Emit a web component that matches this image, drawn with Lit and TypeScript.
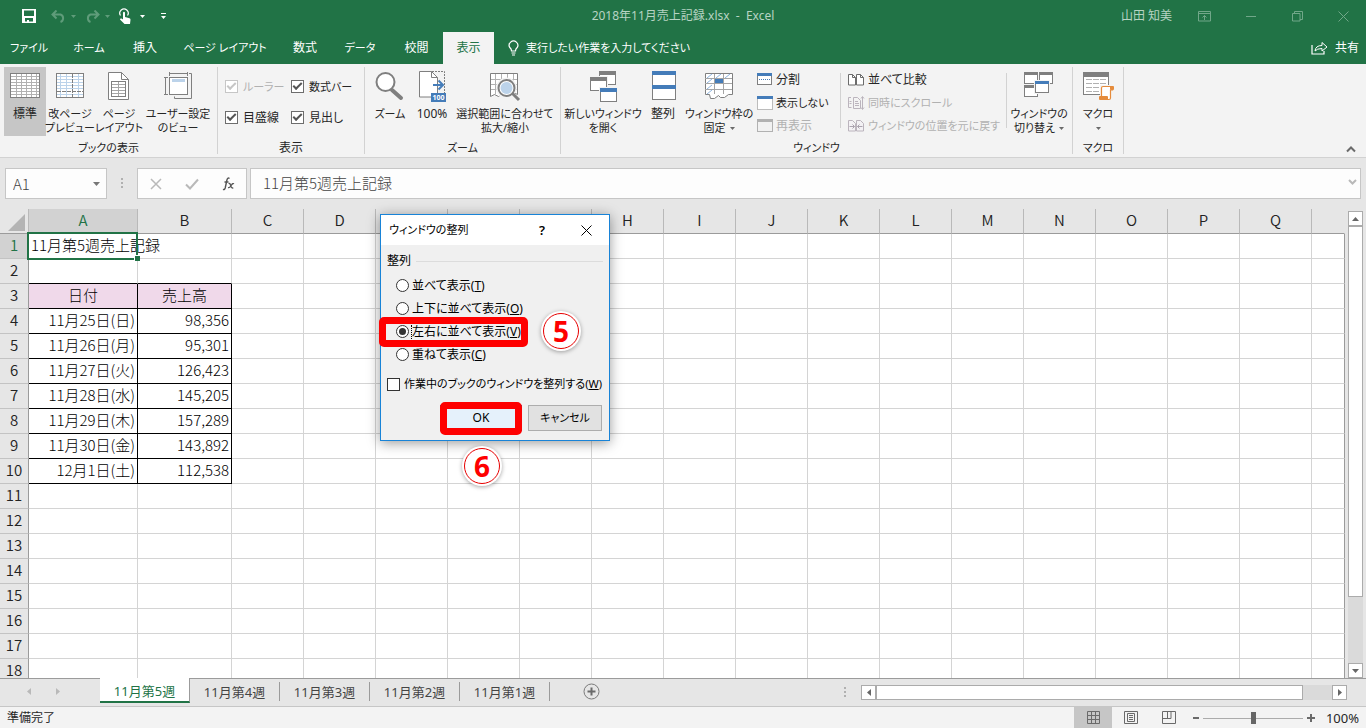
import { LitElement, html, css, svg, nothing } from "lit";
import { customElement, state } from "lit/decorators.js";
import { classMap } from "lit/directives/class-map.js";

const GRAY = "#7f7f7f";
const BLUE = "#447cb9";
const PALE = "#bcd3ea";

type Icon = { w: number; h: number; body: unknown };
const icon = (i: Icon) => html`<svg class="ico" width=${i.w} height=${i.h} viewBox="0 0 ${i.w} ${i.h}" aria-hidden="true">${i.body}</svg>`;
const caret = html`<svg class="caret" width="5" height="3" viewBox="0 0 5 3" aria-hidden="true"><path d="M0 0h5L2.500 3z" fill="currentColor"/></svg>`;

// Labels made mostly of kana are set one step smaller than kanji labels.
const sizeOf = (t: string) => ((t.match(/[\u3040-\u30ff]/g)?.length ?? 0) * 2 >= t.length ? "kana" : "kanji");

const gridPath = (x: number, y: number, w: number, h: number, sx: number, sy: number) => {
  let d = "";
  for (let i = x + sx; i < x + w; i += sx) d += `M${i + 0.5} ${y}v${h}`;
  for (let j = y + sy; j < y + h; j += sy) d += `M${x} ${j + 0.5}h${w}`;
  return d;
};

const ICONS: Record<string, Icon> = {
  normal: { w: 32, h: 32, body: svg`
    <rect x="1.5" y="3.5" width="29" height="24" fill="#fff" stroke=${GRAY}/>
    <path d=${gridPath(2, 3, 28, 24, 5, 3)} stroke="#b1b1b1" fill="none"/>
    <rect x="1.5" y="3.5" width="29" height="24" fill="none" stroke=${GRAY}/>` },
  breaks: { w: 32, h: 32, body: svg`
    <rect x="2.5" y="3.5" width="27" height="24" fill="#fff" stroke=${GRAY}/>
    <path d="M6.500 4v23M12.500 4v23M24.500 4v23M3 6.500h26M3 9.500h26M3 12.500h26M3 15.500h26M3 18.500h26M3 24.500h26" stroke=${PALE} fill="none"/>
    <path d="M18.500 4v23" stroke=${GRAY} stroke-dasharray="4 1"/>
    <path d="M3 21.500h26" stroke=${GRAY} stroke-dasharray="4 1"/>
    <rect x="2.500" y="3.500" width="27" height="24" fill="none" stroke=${GRAY}/>` },
  page: { w: 32, h: 32, body: svg`
    <path d="M5.500 2.500h13l7 7v20h-20z" fill="#fff" stroke=${GRAY}/>
    <path d="M18.500 2.500v7h7" fill="none" stroke=${GRAY}/>
    <rect x="8.500" y="11.500" width="14" height="15" fill="none" stroke=${GRAY}/>
    <path d="M15.500 12v14M9 14.500h13M9 17.500h13M9 20.500h13M9 23.500h13" stroke="#a5a5a5"/>` },
  custom: { w: 32, h: 32, body: svg`
    <path d="M7.500 2v4M25.500 2v4M7 3.500h19M2 7.500h4M2 24.500h4M3.500 7v18" stroke=${GRAY} fill="none"/>
    <path d="M27 3.500h2.500v25h-17v-2" fill="none" stroke=${GRAY}/>
    <rect x="7.500" y="7.500" width="18" height="17" fill="#fff" stroke=${GRAY}/>
    <rect x="10" y="9" width="13" height="3" fill=${PALE}/>` },
  zoom: { w: 32, h: 32, body: svg`
    <path d="M18 20l9 8" stroke=${GRAY} stroke-width="4" stroke-linecap="round"/>
    <circle cx="11.500" cy="12" r="9" fill="#fff" stroke=${GRAY} stroke-width="2"/>` },
  full: { w: 32, h: 32, body: svg`
    <path d="M16 1.500h12.500v22" fill="none" stroke=${GRAY} stroke-dasharray="2 1"/>
    <path d="M3.500 1.500h12l6 6v19.500h-18z" fill="#fff" stroke=${GRAY}/>
    <path d="M15.500 1.500v6h6" fill="none" stroke=${GRAY}/>
    <path d="M17 15h10M22.500 10.500l4.500 4.500l-4.500 4.500" fill="none" stroke=${BLUE} stroke-width="2"/>
    <rect x="15" y="23" width="15" height="9" fill=${BLUE}/>
    <text x="22.500" y="30" font-size="7" font-weight="700" text-anchor="middle" fill="#fff">100</text>` },
  select: { w: 32, h: 32, body: svg`
    <path d="M1.500 3.500h27v21l-4-2-5 4-5-4-5 4-4-2-4 2z" fill="#fff" stroke=${GRAY}/>
    <path d="M6.500 4v20M12.500 4v20M18.500 4v20M24.500 4v20M2 9.500h26M2 14.500h26M2 19.500h26" stroke="#b1b1b1"/>
    <circle cx="17.500" cy="18" r="9" fill="none" stroke="#f3f3f3" stroke-width="3"/>
    <path d="M23 23l7 7" stroke=${GRAY} stroke-width="3"/>
    <circle cx="17.500" cy="18" r="8" fill="#fff" stroke=${GRAY} stroke-width="2"/>
    <circle cx="17.500" cy="18" r="6" fill=${PALE}/>` },
  newwin: { w: 32, h: 32, body: svg`
    <rect x="12.500" y="1.500" width="16" height="13" fill="#fff" stroke=${GRAY}/><rect x="12" y="1" width="17" height="4" fill=${GRAY}/>
    <rect x="2" y="6" width="19" height="16" fill="#f3f3f3"/>
    <rect x="3.500" y="7.500" width="16" height="13" fill="#fff" stroke=${GRAY}/><rect x="3" y="7" width="17" height="4" fill=${GRAY}/>
    <rect x="12" y="17" width="19" height="15" fill="#f3f3f3"/>
    <rect x="13.500" y="18.500" width="16" height="13" fill="#fff" stroke=${GRAY}/><rect x="13" y="18" width="17" height="4" fill=${BLUE}/>` },
  arrange: { w: 32, h: 32, body: svg`
    <rect x="5.500" y="1.500" width="23" height="28" fill="#fff" stroke=${GRAY}/>
    <rect x="5" y="1" width="24" height="4" fill=${BLUE}/><rect x="5" y="15" width="24" height="4" fill=${BLUE}/>` },
  freeze: { w: 32, h: 32, body: svg`
    <path d="M2.500 3.500h27v21h-4l-4 3h-4l-2-2-4 3h-4l-1-4h-4z" fill="#fff" stroke=${GRAY}/>
    <path d="M11.500 4v20M20.500 4v20M2 8.500h27M2 13.500h27M2 19.500h27" stroke="#a5a5a5"/>
    <path d="M4 8l5-4M13 8l5-4M22 8l5-4M4 13l5-4M4 19l5-4M4 24l5-4" stroke="#8eb4de"/>
    <rect x="12" y="9" width="8" height="4" fill=${BLUE}/>` },
  split: { w: 16, h: 14, body: svg`
    <rect x=".5" y=".5" width="14" height="11" fill="#fff" stroke=${GRAY}/><rect width="15" height="3" fill=${BLUE}/>
    <path d="M2 6.500h11" stroke=${BLUE} stroke-dasharray="1 1"/>` },
  hide: { w: 16, h: 14, body: svg`
    <rect x=".5" y=".5" width="15" height="13" fill="#fff" stroke=${GRAY} stroke-dasharray="1 1"/><rect width="16" height="3" fill=${BLUE}/>` },
  unhide: { w: 16, h: 14, body: svg`
    <rect x=".5" y=".5" width="15" height="12" fill="#f1f1f1" stroke="#b1b1b1"/><rect width="16" height="3" fill="#b1b1b1"/>` },
  side: { w: 17, h: 14, body: svg`
    <path d="M.5 1.500h4l3 3v7.500h-7zM8.500 1.500h4l3 3v7.500h-7z" fill="#fff" stroke="#6b6b6b"/>
    <path d="M4.500 1.500v3h3M12.500 1.500v3h3" fill="none" stroke="#6b6b6b"/>` },
  sync: { w: 17, h: 14, body: svg`
    <path d="M3 1.500h-2.500v10h3M5.500 1.500h4l3 3v8h-7zM7 5.500h3M7 7.500h4M7 9.500h4M1.500 5.500h2M1.500 7.500h2M14.500 1v12M13 2.500l1.500-2 1.500 2M13 11.500l1.500 2 1.500-2" fill="none" stroke="#bbb4bd"/>` },
  reset: { w: 17, h: 14, body: svg`
    <path d="M.5 1.500h4l3 3v7.500h-7zM8.500 1.500h4l3 3v7.500h-7z" fill="#f3f1f4" stroke="#bbb4bd"/>
    <path d="M1.500 7.500h5M4.500 5.500l2 2-2 2M14.500 7.500h-5M11.500 5.500l-2 2 2 2" fill="none" stroke="#aaa2ae"/>` },
  switchwin: { w: 32, h: 32, body: svg`
    <rect x="1.500" y="2.500" width="13" height="11" fill="#fff" stroke=${GRAY}/><rect x="1" y="2" width="14" height="3" fill=${GRAY}/>
    <rect x="16.500" y="2.500" width="13" height="11" fill="#fff" stroke=${GRAY}/><rect x="16" y="2" width="14" height="3" fill=${GRAY}/>
    <rect x="1.500" y="15.500" width="13" height="11" fill="#fff" stroke=${GRAY}/><rect x="1" y="15" width="14" height="3" fill=${GRAY}/>
    <rect x="11" y="10" width="16" height="14" fill="#f3f3f3"/>
    <rect x="12.500" y="11.500" width="13" height="11" fill="#fff" stroke=${GRAY}/><rect x="12" y="11" width="14" height="3" fill=${BLUE}/>` },
  macro: { w: 32, h: 32, body: svg`
    <rect x="1.500" y="2.500" width="25" height="22" fill="#fff" stroke=${GRAY}/><rect x="1" y="2" width="26" height="5" fill=${GRAY}/>
    <path d="M4 9.500h6M11 9.500h6M18 9.500h6M4 13.500h6M11 13.500h6M18 13.500h6M4 17.500h6M11 17.500h6M4 21.500h6M11 21.500h6" stroke="#b1b1b1"/>
    <path d="M19.500 16.500h11v4h-2v8.500h-9z" fill="#fff" stroke="#f3f3f3" stroke-width="3"/>
    <path d="M19.500 26v-8q0-1.500 1.500-1.500h9.500v3.500h-2v8q0 1.500-1.500 1.500h-8.500" fill="#fff" stroke="#e58b3b" stroke-width="1.200"/>
    <rect x="17" y="26" width="9" height="4" rx="1" fill="#e58b3b"/><rect x="28" y="16" width="4" height="4" rx="1" fill="#e58b3b"/>` },
};

const TABS = ["ファイル", "ホーム", "挿入", "ページ レイアウト", "数式", "データ", "校閲", "表示"];
const COLS = "ABCDEFGHIJKLMNOPQ".split("");
const SHEETS = ["11月第5週", "11月第4週", "11月第3週", "11月第2週", "11月第1週"];
const DATA: Record<number, [string, string]> = {
  1: ["11月第5週売上記録", ""],
  3: ["日付", "売上高"],
  4: ["11月25日(日)", "98,356"],
  5: ["11月26日(月)", "95,301"],
  6: ["11月27日(火)", "126,423"],
  7: ["11月28日(水)", "145,205"],
  8: ["11月29日(木)", "157,289"],
  9: ["11月30日(金)", "143,892"],
  10: ["12月1日(土)", "112,538"],
};
const MODES = [["並べて表示", "T"], ["上下に並べて表示", "O"], ["左右に並べて表示", "V"], ["重ねて表示", "C"]];

const FONT = css`
  :host {
    font-family: "Noto Sans", "Noto Sans CJK JP", sans-serif;
    font-size: 12px;
    line-height: 14px;
    font-feature-settings: "palt";
    color: #262626;
  }
  *, *::before, *::after { box-sizing: border-box; }
  button {
    font: inherit; color: inherit; background: none; border: 0; padding: 0; margin: 0;
    font-feature-settings: inherit; white-space: nowrap;
  }
  input { font: inherit; color: inherit; margin: 0; }
  label { white-space: nowrap; }
  svg { display: block; flex: none; }
  .kana { font-size: 11px; }
`;

@customElement("title-bar")
class TitleBar extends LitElement {
  static styles = [FONT, css`
    :host { display: block; background: #217346; color: #fff; }
    .top { display: grid; grid-template-columns: 1fr auto 1fr; height: 32px; align-items: center; }
    .quick { display: flex; align-items: center; padding-left: 22px; }
    .quick .gap { margin-left: 15px; }
    .quick .near { margin-left: 5px; }
    .quick .mid { margin-left: 9px; }
    .dim { color: #5f9c7a; }
    .name { color: #b7d4c3; white-space: pre; }
    .right { display: flex; align-items: center; justify-content: flex-end; padding-right: 17px; color: #71a789; }
    .user { color: #b7d4c3; margin-right: 26px; }
    .win { margin-left: 35px; }
    .win:first-of-type { margin-left: 0; }
    .tabs { display: flex; height: 32px; align-items: stretch; }
    .strip { display: grid; grid-template-columns: 58px 62px 50px 110px 50px 60px 53px 51px; }
    .strip .on { background: #f3f3f3; color: #217346; }
    .tell, .share { display: flex; align-items: center; gap: 7px; }
    .tell { margin-left: 14px; flex: 1; }
    .share { margin-right: 7px; }
  `];
  render() {
    return html`
      <div class="top">
        <div class="quick">
          <button aria-label="上書き保存"><svg width="14" height="14" viewBox="0 0 14 14"><path d="M0 0h14v14H0zM2 1.500v5.500h10V1.500zM3 9v3.500h2V11h2v1.500h4V9z" fill="#fff" fill-rule="evenodd"/></svg></button>
          <button class="gap dim" aria-label="元に戻す"><svg width="15" height="13" viewBox="0 0 15 13"><path d="M1 4.500h8.500a4 4 0 0 1 0 7.500M5.500.5l-4 4 4 4" fill="none" stroke="currentColor" stroke-width="2"/></svg></button>
          <button class="near dim" aria-label="元に戻すメニュー">${caret}</button>
          <button class="mid dim" aria-label="やり直し"><svg width="15" height="13" viewBox="0 0 15 13"><path d="M14 4.500H5.500a4 4 0 0 0 0 7.500M9.500.5l4 4-4 4" fill="none" stroke="currentColor" stroke-width="2"/></svg></button>
          <button class="near dim" aria-label="やり直しメニュー">${caret}</button>
          <button class="mid" aria-label="タッチ/マウス"><svg width="12" height="17" viewBox="0 0 12 17"><path d="M1.500 7.500a4.200 4.200 0 1 1 7 0" fill="none" stroke="#fff" stroke-width="1.200"/><path d="M4 4.500q1-1.500 2 0V9l4.500 1.200q1 .3 1 1.500L11 16H5.500L1 11.500q0-1.500 1.500-1L4 11.500z" fill="#fff"/></svg></button>
          <button class="mid" aria-label="タッチメニュー">${caret}</button>
          <button class="gap" aria-label="クイック アクセスの設定"><svg width="7" height="6" viewBox="0 0 7 6"><path d="M1 0h5v1H1zM1 3h5L3.500 6z" fill="#fff"/></svg></button>
        </div>
        <span class="name">2018年11月売上記録.xlsx  -  Excel</span>
        <div class="right">
          <span class="user">山田 知美</span>
          <button class="win" aria-label="リボンの表示オプション"><svg width="13" height="11" viewBox="0 0 13 11"><path d="M.5.5h12v9.500H.5zM.5 2.500h12M6.500 9V4.500M4.500 6.500l2-2 2 2" fill="none" stroke="currentColor"/></svg></button>
          <button class="win" aria-label="最小化"><svg width="11" height="11" viewBox="0 0 11 11"><path d="M0 5.500h10" stroke="currentColor"/></svg></button>
          <button class="win" aria-label="元に戻す"><svg width="11" height="11" viewBox="0 0 11 11"><path d="M.5 2.500h7.500V10H.5zM2.500 2.500v-2h8v8H8" fill="none" stroke="currentColor"/></svg></button>
          <button class="win" aria-label="閉じる"><svg width="11" height="11" viewBox="0 0 11 11"><path d="M.5.5l10 10M10.500.5l-10 10" stroke="currentColor"/></svg></button>
        </div>
      </div>
      <nav class="tabs">
        <div class="strip">${TABS.map((t, i) => html`<button class=${classMap({ on: i === 7, [sizeOf(t)]: true })}>${t}</button>`)}</div>
        <button class="tell kana"><svg width="11" height="16" viewBox="0 0 11 16"><path d="M3.500 11Q3.500 9 2 7.800A4.300 4.300 0 1 1 9 7.800Q7.500 9 7.500 11zM3.500 13h4M4 15h3" fill="none" stroke="#fff" stroke-width="1.200"/></svg>実行したい作業を入力してください</button>
        <button class="share"><svg width="17" height="14" viewBox="0 0 17 14"><path d="M1 4v9h12v-3" fill="none" stroke="#fff" stroke-width="1.200"/><path d="M4 10q.5-5.500 7-5.500V1.500L16 6l-5 4V7.500Q6 7.500 4 10z" fill="none" stroke="#fff"/></svg>共有</button>
      </nav>`;
  }
}

@customElement("excel-ribbon")
class ExcelRibbon extends LitElement {
  static styles = [FONT, css`
    :host { display: block; background: #f3f3f3; border-bottom: 1px solid #d2d2d2; }
    .ribbon { display: flex; height: 93px; padding: 3px 0; }
    .group { display: flex; flex-direction: column; border-right: 1px solid #d2d2d2; }
    .g1 { width: 218px; } .g2 { width: 147px; } .g3 { width: 196px; } .g4 { width: 512px; } .g5 { width: 51px; }
    .items { display: flex; flex: 1; }
    .g1 .items, .g3 .items, .g4 .items { padding-left: 4px; }
    .caption { text-align: center; height: 14px; margin-bottom: -1px; }
    .big { display: flex; flex-direction: column; align-items: center; padding-top: 3px; height: 69px; flex: none; }
    .big.on { background: #c6c6c6; }
    .big .ico { margin-bottom: 5px; }
    .line { display: flex; align-items: center; gap: 4px; height: 14px; }
    .w42 { width: 42px; } .w48 { width: 48px; } .w50 { width: 50px; } .w68 { width: 68px; }
    .w44 { width: 44px; } .w104 { width: 104px; } .w76 { width: 76px; } .w64 { width: 64px; }
    .caret { color: #6a6a6a; }
    .checks { display: grid; grid-template-columns: 66px auto; grid-auto-rows: 31px; padding: 4px 0 0 7px; justify-content: start; }
    .check { display: flex; align-items: center; gap: 5px; }
    .check input {
      appearance: none; width: 13px; height: 13px; border: 1px solid #6d6d6d; background: #fff; display: grid; place-items: center; flex: none;
    }
    .check input:checked::before {
      content: ""; width: 9px; height: 5px; border: solid #555; border-width: 0 0 2px 2px; transform: rotate(-45deg) translate(1px, -1px);
    }
    .check.off { color: #b1b1b1; }
    .check.off input { border-color: #c6c6c6; }
    .check.off input:checked::before { border-color: #c6c6c6; }
    .small { display: flex; flex-direction: column; flex: none; padding-top: 1px; }
    .small button { display: flex; align-items: center; height: 23px; gap: 3px; }
    .small button:disabled { color: #b1b1b1; }
    .s1 { width: 87px; padding-left: 4px; } .s2 { width: 159px; padding-left: 1px; margin-left: 6px; }
    .rule { width: 1px; height: 55px; margin-top: 6px; background: #d2d2d2; flex: none; }
    .end { flex: 1; display: flex; align-items: flex-end; justify-content: flex-end; padding: 0 10px 1px 0; }
  `];
  big(name: string, cls: string, l1: string, l2 = "", drop = false) {
    return html`<button class="big ${cls} ${sizeOf(l1)}">${icon(ICONS[name])}<span class="line">${l1}</span><span class="line">${l2}${drop ? caret : nothing}</span></button>`;
  }
  small(name: string, text: string, off = false) {
    return html`<button class=${sizeOf(text)} ?disabled=${off}>${icon(ICONS[name])}<span>${text}</span></button>`;
  }
  check(text: string, off = false) {
    return html`<label class="check ${sizeOf(text)} ${off ? "off" : ""}"><input type="checkbox" checked ?disabled=${off}>${text}</label>`;
  }
  render() {
    return html`<div class="ribbon">
      <section class="group g1"><div class="items">
        ${this.big("normal", "w42 on", "標準")}
        ${this.big("breaks", "w48", "改ページ", "プレビュー")}
        ${this.big("page", "w50", "ページ", "レイアウト")}
        ${this.big("custom", "w68", "ユーザー設定", "のビュー")}
      </div><div class="caption kana">ブックの表示</div></section>
      <section class="group g2"><div class="items"><div class="checks">
        ${this.check("ルーラー", true)}${this.check("数式バー")}${this.check("目盛線")}${this.check("見出し")}
      </div></div><div class="caption">表示</div></section>
      <section class="group g3"><div class="items">
        ${this.big("zoom", "w42", "ズーム")}
        ${this.big("full", "w42", "100%")}
        ${this.big("select", "w104 kana", "選択範囲に合わせて", "拡大/縮小")}
      </div><div class="caption kana">ズーム</div></section>
      <section class="group g4"><div class="items">
        ${this.big("newwin", "w76", "新しいウィンドウ", "を開く")}
        ${this.big("arrange", "w44", "整列")}
        ${this.big("freeze", "w68", "ウィンドウ枠の", "固定", true)}
        <div class="small s1">${this.small("split", "分割")}${this.small("hide", "表示しない")}${this.small("unhide", "再表示", true)}</div>
        <div class="rule"></div>
        <div class="small s2">${this.small("side", "並べて比較")}${this.small("sync", "同時にスクロール", true)}${this.small("reset", "ウィンドウの位置を元に戻す", true)}</div>
        <div class="rule"></div>
        ${this.big("switchwin", "w64", "ウィンドウの", "切り替え", true)}
      </div><div class="caption kana">ウィンドウ</div></section>
      <section class="group g5"><div class="items">${this.big("macro", "w50", "マクロ", "", true)}</div><div class="caption kana">マクロ</div></section>
      <div class="end"><button aria-label="リボンを折りたたむ"><svg width="10" height="7" viewBox="0 0 10 7"><path d="M1 5.500l4-4 4 4" fill="none" stroke="#6a6a6a" stroke-width="2"/></svg></button></div>
    </div>`;
  }
}

@customElement("formula-bar")
class FormulaBar extends LitElement {
  static styles = [FONT, css`
    :host { display: flex; padding: 10px 5px; height: 51px; background: #e6e6e6; }
    .box { display: flex; align-items: center; background: #fdfdfd; border: 1px solid #c6c6c6; height: 31px; }
    .box input { border: 0; background: none; padding: 0; min-width: 0; flex: 1; font-size: 15px; color: #444; outline: 0;
      font-family: "Noto Sans CJK JP", sans-serif; font-weight: 300; height: 22px; }
    .ref { width: 102px; padding: 0 6px 0 7px; }
    .dots { width: 30px; display: grid; place-items: center; }
    .fx { width: 110px; justify-content: space-between; padding: 0 11px 0 12px; margin-right: 3px; }
    .text { flex: 1; padding: 0 3px 3px 12px; }
  `];
  render() {
    return html`
      <div class="box ref"><input aria-label="名前ボックス" value="A1"><button aria-label="名前の一覧"><svg width="7" height="4" viewBox="0 0 7 4"><path d="M0 0h7L3.500 4z" fill="#777"/></svg></button></div>
      <div class="dots"><svg width="2" height="11" viewBox="0 0 2 11"><path d="M0 0h2v2H0zM0 4h2v2H0zM0 8h2v2H0z" fill="#b0b0b0"/></svg></div>
      <div class="box fx">
        <button aria-label="キャンセル"><svg width="12" height="12" viewBox="0 0 12 12"><path d="M1 1l10 10M11 1L1 11" stroke="#b9b9b9" stroke-width="1.500"/></svg></button>
        <button aria-label="入力"><svg width="14" height="12" viewBox="0 0 14 12"><path d="M1 6.500l4 4L13 1.500" fill="none" stroke="#b9b9b9" stroke-width="2"/></svg></button>
        <button aria-label="関数の挿入"><svg width="13" height="14" viewBox="0 0 13 14"><path d="M7.500 1.500q-2-1.500-2.700 2L3.200 11Q2.700 13 1 12.300M2.500 5h4" fill="none" stroke="#555" stroke-width="1.400"/><path d="M6.500 6.500q1.500-.5 2 1.500l.8 2q.7 1.500 2 .7M12 6.800Q10.800 6 9.500 8l-1 1.500Q7.500 11 6 10.500" fill="none" stroke="#555" stroke-width="1.300"/></svg></button>
      </div>
      <div class="box text"><input aria-label="数式バー" value="11月第5週売上記録"><button aria-label="数式バーの展開"><svg width="9" height="6" viewBox="0 0 9 6"><path d="M1 1l3.500 3.500L8 1" fill="none" stroke="#b9b9b9" stroke-width="2"/></svg></button></div>`;
  }
}

@customElement("sheet-grid")
class SheetGrid extends LitElement {
  static styles = [FONT, css`
    :host { display: flex; min-height: 0; background: #e6e6e6; overflow: hidden; }
    .view { flex: 1; overflow: hidden; min-width: 0; }
    table { width: 100%; table-layout: fixed; border-spacing: 0; background: #fff; font: 15px/22px "Noto Sans CJK JP", sans-serif;
      font-feature-settings: normal; color: #000; }
    .c0 { width: 29px; } .cA { width: 109px; } .cB { width: 94px; } .c { width: 72px; }
    th, td { padding: 0 2px 2px; height: 25px; white-space: nowrap; font-weight: 300; border-right: 1px solid #d4d4d4; border-bottom: 1px solid #d4d4d4; }
    th { background: #e6e6e6; padding: 0 0 2px; font-weight: 350; color: #222; }
    thead th { border-right-color: #b9b9b9; border-bottom-color: #9b9b9b; }
    thead th:last-child { border-right-color: #e6e6e6; }
    tbody th { border-right-color: #9b9b9b; border-bottom-color: #c3c3c3; }
    td:last-child { border-right-color: #9b9b9b; }
    th.on { background: #d2d2d2; color: #217346; }
    .corner { float: right; margin: 4px 3px 0 0; }
    .num { text-align: right; }
    .head { text-align: center; background: #f0d9ea; }
    .black { border-right-color: #000; border-bottom-color: #000; }
    .under { border-bottom-color: #000; }
    .active { position: relative; }
    .sel { position: absolute; inset: -2px -1px -2px -2px; border: 2px solid #217346; }
    .handle { position: absolute; right: -3px; bottom: -3px; width: 6px; height: 6px; background: #217346; border: solid #fff; border-width: 1px 0 0 1px; }
    .scroll { width: 15px; margin: 2px 3px 0 3px; display: flex; flex-direction: column; background: #dadada; }
    .scroll button { height: 15px; display: grid; place-items: center; background: #fff; border: 1px solid #ababab; }
    .thumb { flex: 1; background: #fff; border: 1px solid #ababab; }
    .rest { flex: 0 0 66px; }
  `];
  cell(r: number, c: number) {
    const text = DATA[r]?.[c] ?? "";
    const table = c < 2 && r >= 3 && r <= 10;
    const cls = classMap({ black: table, under: r === 2 && c < 2, head: r === 3 && c < 2, num: table && r > 3, active: r === 1 && c === 0 });
    return html`<td class=${cls}>${text}${r === 1 && c === 0 ? html`<span class="sel"></span><span class="handle"></span>` : nothing}</td>`;
  }
  render() {
    return html`
      <div class="view"><table>
        <colgroup><col class="c0"><col class="cA"><col class="cB">${COLS.slice(2).map(() => html`<col class="c">`)}<col></colgroup>
        <thead><tr><th><svg class="corner" width="17" height="17" viewBox="0 0 17 17"><path d="M17 0v17H0z" fill="#b4b4b4"/></svg></th>
          ${COLS.map((c, i) => html`<th scope="col" class=${i ? "" : "on"}>${c}</th>`)}<th></th></tr></thead>
        <tbody>${Array.from({ length: 18 }, (_, i) => i + 1).map((r) => html`<tr>
          <th scope="row" class=${r === 1 ? "on" : ""}>${r}</th>${Array.from({ length: 18 }, (_, c) => this.cell(r, c))}</tr>`)}</tbody>
      </table></div>
      <div class="scroll">
        <button aria-label="上へ"><svg width="7" height="4" viewBox="0 0 7 4"><path d="M0 4h7L3.500 0z" fill="#666"/></svg></button>
        <div class="thumb"></div><div class="rest"></div>
        <button aria-label="下へ"><svg width="7" height="4" viewBox="0 0 7 4"><path d="M0 0h7L3.500 4z" fill="#666"/></svg></button>
      </div>`;
  }
}

@customElement("sheet-footer")
class SheetFooter extends LitElement {
  static styles = [FONT, css`
    :host { display: block; background: #e6e6e6; }
    .bar { display: flex; height: 29px; border-top: 1px solid #9b9b9b; border-bottom: 1px solid #c6c6c6; }
    .nav { width: 100px; display: flex; gap: 25px; padding: 0 0 2px 27px; align-items: center; }
    .tabs { display: flex; align-items: flex-start; flex: 1; font-size: 13px; color: #444; }
    .tab { width: 90px; height: 19px; margin-top: 3px; border-right: 1px solid #9b9b9b; }
    .tab.on { height: 25px; margin-top: -1px; padding-top: 2px; background: #fff; color: #217346; border-bottom: 2px solid #217346; }
    .add { margin: 4px 0 0 33px; }
    .grip { padding: 8px 15px 0 0; }
    .hscroll { flex: 0 1 486px; display: flex; height: 15px; margin: 6px 19px 0 0; background: #dadada; }
    .hscroll button { width: 15px; display: grid; place-items: center; background: #fff; border: 1px solid #ababab; }
    .thumb { flex: 1; background: #fff; border: 1px solid #ababab; }
    .rest { flex: 0 0 29px; }
    .status { display: flex; height: 21px; align-items: center; background: #f3f3f3; padding: 0 7px; }
    .ready { flex: 1; }
    .view { width: 38px; height: 21px; display: grid; place-items: center; }
    .view.on { background: #c6c6c6; }
    .step { margin: 0 4px; }
    .step.first { margin-left: 5px; }
    .zoom { appearance: none; width: 100px; height: 12px; background: linear-gradient(#ababab, #ababab) 0 6px / 100% 1px no-repeat; }
    .zoom::-webkit-slider-thumb { appearance: none; width: 5px; height: 12px; background: #666; }
    .pct { margin-left: 6px; width: 34px; text-align: right; white-space: nowrap; font-size: 13px; }
  `];
  render() {
    const V = "#6a6a6a";
    return html`
      <div class="bar">
        <div class="nav">
          <button aria-label="前のシート"><svg width="4" height="7" viewBox="0 0 4 7"><path d="M4 0v7L0 3.500z" fill="#b9b9b9"/></svg></button>
          <button aria-label="次のシート"><svg width="4" height="7" viewBox="0 0 4 7"><path d="M0 0v7l4-3.500z" fill="#b9b9b9"/></svg></button>
        </div>
        <div class="tabs">${SHEETS.map((s, i) => html`<button class="tab ${i ? "" : "on"}">${s}</button>`)}
          <button class="add" aria-label="新しいシート"><svg width="17" height="17" viewBox="0 0 17 17"><circle cx="8.500" cy="8.500" r="7.500" fill="none" stroke="#7a7a7a"/><path d="M8.500 4.500v8M4.500 8.500h8" stroke="#6a6a6a" stroke-width="2"/></svg></button></div>
        <div class="grip"><svg width="2" height="11" viewBox="0 0 2 11"><path d="M0 0h2v2H0zM0 4h2v2H0zM0 8h2v2H0z" fill="#b0b0b0"/></svg></div>
        <div class="hscroll">
          <button aria-label="左へ"><svg width="4" height="7" viewBox="0 0 4 7"><path d="M4 0v7L0 3.500z" fill="#666"/></svg></button>
          <div class="thumb"></div><div class="rest"></div>
          <button aria-label="右へ"><svg width="4" height="7" viewBox="0 0 4 7"><path d="M0 0v7l4-3.500z" fill="#666"/></svg></button>
        </div>
      </div>
      <div class="status">
        <span class="ready">準備完了</span>
        <button class="view on" aria-label="標準"><svg width="13" height="13" viewBox="0 0 13 13"><path d="M.5.5h12v12H.5zM4.500 0v13M8.500 0v13M0 4.500h13M0 8.500h13" fill="none" stroke=${V}/></svg></button>
        <button class="view" aria-label="ページ レイアウト"><svg width="14" height="13" viewBox="0 0 14 13"><path d="M.5.5h13v12H.5zM3.500 2.500h7v8h-7zM5 4.500h4M5 6.500h4M5 8.500h4" fill="none" stroke=${V}/></svg></button>
        <button class="view" aria-label="改ページ プレビュー"><svg width="14" height="13" viewBox="0 0 14 13"><path d="M.5.5h13v12H.5zM.5 7.500h8.500V.5M5.500 .5v7" fill="none" stroke=${V}/></svg></button>
        <button class="step first" aria-label="縮小"><svg width="6" height="8" viewBox="0 0 6 8"><path d="M0 4h6" stroke=${V} stroke-width="2"/></svg></button>
        <input class="zoom" type="range" min="0" max="100" value="50" aria-label="ズーム">
        <button class="step" aria-label="拡大"><svg width="8" height="8" viewBox="0 0 8 8"><path d="M0 4h8M4 0v8" stroke=${V} stroke-width="2"/></svg></button>
        <span class="pct">100%</span>
      </div>`;
  }
}

@customElement("arrange-dialog")
class ArrangeDialog extends LitElement {
  @state() mode = 2;
  static styles = [FONT, css`
    :host { display: block; width: 230px; background: #f0f0f0; border: 1px solid #1883d7; box-shadow: 0 2px 12px rgba(0, 0, 0, .4); color: #000; }
    .title { display: flex; align-items: center; height: 30px; background: #fff; padding: 0 17px 0 8px; }
    .title span { flex: 1; }
    .title .help { margin-right: 36px; font-size: 13px; font-weight: 600; }
    .body { padding: 9px 6px 9px 6px; }
    fieldset { border: 0; margin: 0; padding: 0; }
    legend { display: flex; width: 100%; align-items: center; gap: 5px; padding: 0; height: 14px; margin-bottom: 6px; }
    legend::after { content: ""; flex: 1; height: 1px; background: #dcdcdc; }
    .radio { display: flex; align-items: center; height: 23px; padding-left: 9px; gap: 2px; width: fit-content; }
    .radio span { border: 1px dotted transparent; border-width: 0 0 0 1px; }
    .radio.on span { border-left-color: #000; }
    .radio input { appearance: none; width: 13px; height: 13px; border: 1px solid #333; border-radius: 50%; background: #fff; display: grid; place-items: center; }
    .radio input:checked::before { content: ""; width: 7px; height: 7px; border-radius: 50%; background: #333; }
    .check { display: flex; align-items: center; gap: 4px; height: 14px; margin-top: 11px; }
    .check input { appearance: none; width: 13px; height: 13px; border: 1px solid #333; background: #fff; flex: none; }
    .actions { display: flex; justify-content: flex-end; gap: 6px; margin: 14px 1px 0 0; }
    .actions button { width: 74px; height: 26px; background: #e1e1e1; border: 1px solid #adadad; }
    .actions .ok { width: 82px; background: #e5f1fb; border-color: #0078d7; }
  `];
  render() {
    return html`
      <div class="title"><span class="kana">ウィンドウの整列</span><button class="help" aria-label="ヘルプ">?</button>
        <button aria-label="閉じる"><svg width="11" height="11" viewBox="0 0 11 11"><path d="M.5.5l10 10M10.500.5l-10 10" stroke="#000"/></svg></button></div>
      <div class="body">
        <fieldset><legend>整列</legend>
          ${MODES.map(([t, k], i) => html`<label class="radio ${i === this.mode ? "on" : ""}"><input type="radio" name="mode" .checked=${i === this.mode} @change=${() => (this.mode = i)}><span>${t}(<u>${k}</u>)</span></label>`)}
        </fieldset>
        <label class="check kana"><input type="checkbox"><span>作業中のブックのウィンドウを整列する(<u>W</u>)</span></label>
        <div class="actions"><button class="ok">OK</button><button class="kana">キャンセル</button></div>
      </div>`;
  }
}

@customElement("app-root")
class AppRoot extends LitElement {
  static styles = [FONT, css`
    :host { display: flex; flex-direction: column; height: 100vh; position: relative; overflow: hidden; background: #e6e6e6; }
    title-bar, excel-ribbon, formula-bar, sheet-footer { flex: none; }
    sheet-grid { flex: 1; }
    .overlay { position: absolute; left: 380px; top: 214px; }
    .mark { position: absolute; border: 7px solid #fe0000; border-radius: 5px; pointer-events: none; }
    .mark.option { left: -1px; top: 103px; width: 149px; height: 30px; }
    .mark.ok { left: 60px; top: 188px; width: 82px; height: 33px; }
    .badge { position: absolute; width: 40px; height: 40px; border-radius: 50%; background: #fff; padding: 2px; box-shadow: 0 1px 4px rgba(0, 0, 0, .35); }
    .badge b { display: block; height: 36px; border: 1px solid #e60000; border-radius: 50%; text-align: center;
      font: 700 28px/34px "Noto Sans", sans-serif; color: #fe0000; }
    .badge.five { left: 161px; top: 97px; }
    .badge.six { left: 82px; top: 232px; }
  `];
  render() {
    return html`
      <title-bar></title-bar>
      <excel-ribbon></excel-ribbon>
      <formula-bar></formula-bar>
      <sheet-grid></sheet-grid>
      <sheet-footer></sheet-footer>
      <div class="overlay">
        <arrange-dialog></arrange-dialog>
        <div class="mark option"></div><div class="mark ok"></div>
        <div class="badge five"><b>5</b></div><div class="badge six"><b>6</b></div>
      </div>`;
  }
}
